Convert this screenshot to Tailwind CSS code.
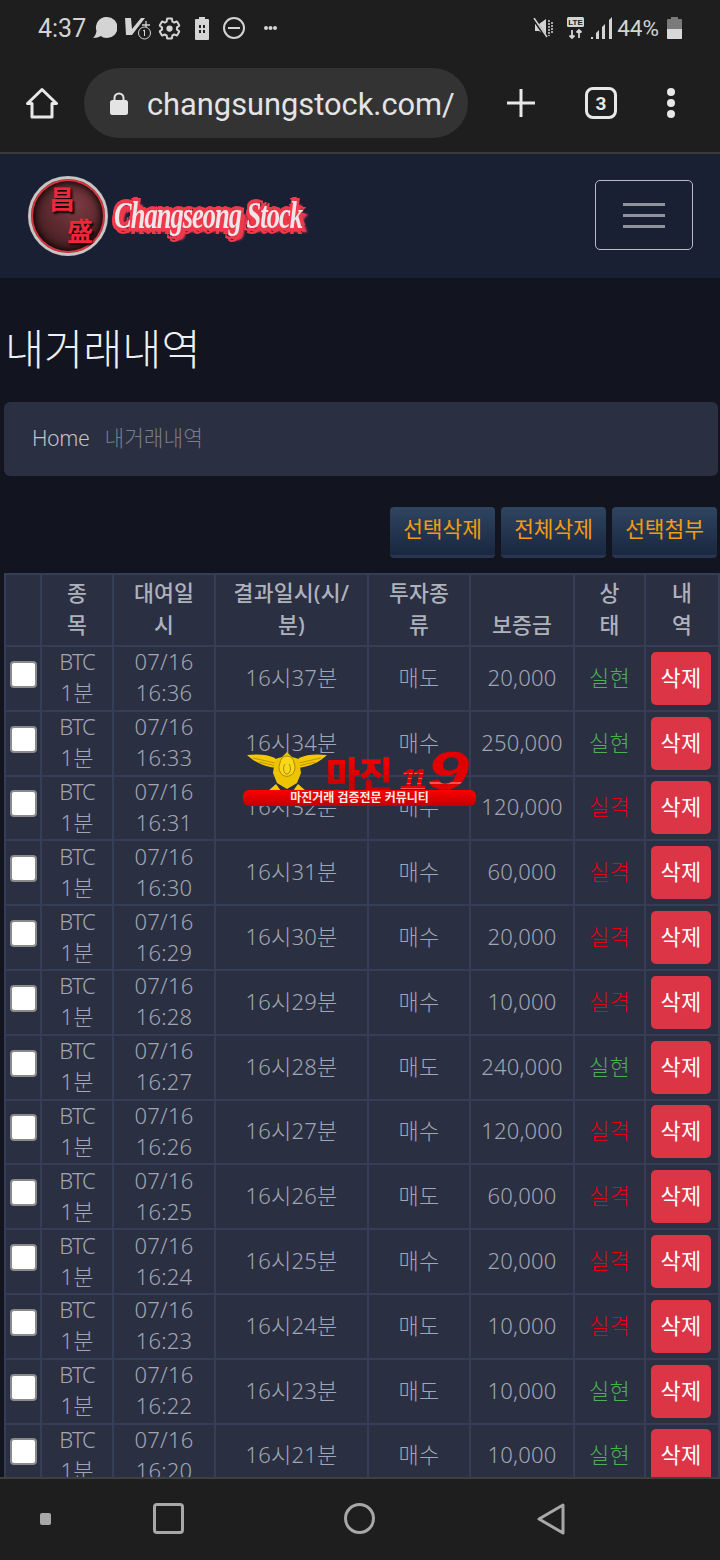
<!DOCTYPE html><html lang="ko">
<head>
  <meta charset="UTF-8" />
  <meta name="viewport" content="width=device-width, initial-scale=1.0" />
  <title>내거래내역</title>
  <script src="https://cdn.jsdelivr.net/npm/@tailwindcss/browser@4"></script>
</head>
<body class="bg-[#1e1e1e] font-['Noto_Sans','Noto_Sans_CJK_KR',sans-serif]">
<div class="relative w-[720px] h-[1560px] overflow-hidden flex flex-col">

  <!-- status bar -->
  <div class="h-[56px] shrink-0 bg-[#1e1e1e] flex items-center pl-[38px] pr-[38px] text-[#d4d4d4] font-['Roboto',sans-serif]">
    <span class="text-[25px] leading-none">4:37</span>
    <svg class="ml-[7px] w-[24px] h-[22px]" viewBox="0 0 24 22" fill="#d4d4d4"><path d="M14 0a10.500 10.500 0 0 1 0 21c-3 0-5-1-6-2-2 1-5 2-8 2 2-2 3-4 3.500-7A10.500 10.500 0 0 1 14 0z"/></svg>
    <svg class="ml-[8px] w-[27px] h-[24px]" viewBox="0 0 27 24"><path d="M0 2h6l1 11L16 2h4L7 19H1z" fill="#d4d4d4"/><path d="M21 5v8M17 9h8" stroke="#d4d4d4" stroke-width="1.300"/><circle cx="19.500" cy="17" r="6" fill="#1e1e1e" stroke="#d4d4d4" stroke-width="1"/><path d="M19.500 14v6M18 15l1.500-1" stroke="#d4d4d4" stroke-width="1" fill="none"/></svg>
    <svg class="ml-[5px] w-[25px] h-[25px]" viewBox="0 0 24 24" fill="none" stroke="#d4d4d4" stroke-width="1.900"><circle cx="12" cy="12" r="3" fill="#d4d4d4" stroke="none"/><path d="M19.140 12.940c.04-.3.06-.61.06-.94 0-.32-.02-.64-.07-.94l2.030-1.580c.18-.14.23-.41.12-.61l-1.920-3.320c-.12-.22-.37-.29-.59-.22l-2.390.96c-.5-.38-1.030-.7-1.620-.94l-.36-2.540c-.04-.24-.24-.41-.48-.41h-3.840c-.24 0-.43.17-.47.41l-.36 2.540c-.59.24-1.130.57-1.620.94l-2.390-.96c-.22-.08-.47 0-.59.22L2.740 8.870c-.12.21-.08.47.12.61l2.030 1.580c-.05.3-.09.63-.09.94s.02.64.07.94l-2.030 1.580c-.18.14-.23.41-.12.61l1.920 3.320c.12.22.37.29.59.22l2.390-.96c.5.38 1.030.7 1.620.94l.36 2.540c.05.24.24.41.48.41h3.840c.24 0 .44-.17.47-.41l.36-2.540c.59-.24 1.130-.56 1.620-.94l2.390.96c.22.08.47 0 .59-.22l1.920-3.320c.12-.22.07-.47-.12-.61l-2.010-1.580z"/></svg>
    <svg class="ml-[12px] w-[16px] h-[23px]" viewBox="0 0 16 23"><path d="M5 0h6v2h3a1 1 0 0 1 1 1v19a1 1 0 0 1-1 1H2a1 1 0 0 1-1-1V3a1 1 0 0 1 1-1h3z" fill="#d4d4d4"/><path d="M5 8h2v3H5zM9 8h2v3H9zM5 13h2v3H5zM9 13h2v3H9z" fill="#1e1e1e"/></svg>
    <svg class="ml-[12px] w-[24px] h-[24px]" viewBox="0 0 24 24" fill="none" stroke="#d4d4d4" stroke-width="2"><circle cx="12" cy="12" r="10"/><path d="M6 12h12"/></svg>
    <svg class="ml-[18px] w-[13px] h-[6px]" viewBox="0 0 13 6" fill="#d4d4d4"><circle cx="2" cy="3" r="2"/><circle cx="6.500" cy="3" r="2"/><circle cx="11" cy="3" r="2"/></svg>
    <div class="flex-1"></div>
    <svg class="w-[21px] h-[20px]" viewBox="0 0 21 20" fill="#d4d4d4"><path d="M2 6h4l7-5v17l-7-5H2z"/><path d="M0 0l13 19" stroke="#1e1e1e" stroke-width="3"/><path d="M1 0l13 19" stroke="#d4d4d4" stroke-width="1.500"/><path d="M16 2v16M19 4v12" stroke="#d4d4d4" stroke-width="1.500" stroke-dasharray="2 1"/></svg>
    <svg class="ml-[13px] w-[17px] h-[22px]" viewBox="0 0 17 22"><rect width="17" height="10" rx="1.500" fill="#d4d4d4"/><text x="8.500" y="8" text-anchor="middle" font-size="8" font-weight="700" fill="#1e1e1e" font-family="Liberation Sans">LTE</text><path d="M5 13v8M2.500 18.500L5 21l2.500-2.500M12 21v-8M9.500 15.500L12 13l2.500 2.500" stroke="#d4d4d4" stroke-width="1.800" fill="none"/></svg>
    <svg class="ml-[7px] w-[21px] h-[22px]" viewBox="0 0 21 22" fill="#d4d4d4"><path d="M0 20h2v2H0zM5 16l3-3v9H5zM11 10l3-3v15h-3zM18 3l3-3v22h-3z"/></svg>
    <span class="ml-[5px] text-[22.500px] leading-none">44%</span>
    <svg class="ml-[8px] w-[15px] h-[22px]" viewBox="0 0 15 22"><path d="M4 0h7v2h3a1 1 0 0 1 1 1v18a1 1 0 0 1-1 1H1a1 1 0 0 1-1-1V3a1 1 0 0 1 1-1h3z" fill="#7a7a7a"/><path d="M0 12h15v9a1 1 0 0 1-1 1H1a1 1 0 0 1-1-1z" fill="#d8d8d8"/></svg>
  </div>

  <!-- browser toolbar -->
  <div class="h-[96px] shrink-0 bg-[#1e1e1e] flex items-center pb-[2px]">
    <svg class="ml-[26px] w-[32px] h-[32px]" viewBox="0 0 32 32" fill="none" stroke="#e8e8e8" stroke-width="3" stroke-linejoin="round"><path d="M1.500 16.500L16 2.500l14.500 14H26V30H6V16.500z"/></svg>
    <div class="ml-[26px] w-[384px] h-[70px] rounded-full bg-[#333333] flex items-center pl-[26px]">
      <svg class="w-[18px] h-[23px]" viewBox="0 0 18 23"><path d="M4.500 9V6a4.500 4.500 0 0 1 9 0v3" fill="none" stroke="#e4e4e4" stroke-width="2"/><rect y="8" width="18" height="15" rx="2.500" fill="#e4e4e4"/></svg>
      <span class="ml-[19px] mt-[4px] text-[30.800px] leading-none text-[#e4e4e4] font-['Roboto',sans-serif] whitespace-nowrap">changsungstock.com/</span>
    </div>
    <svg class="ml-[38px] w-[30px] h-[30px]" viewBox="0 0 30 30" stroke="#e8e8e8" stroke-width="3"><path d="M15 1v28M1 15h28"/></svg>
    <div class="ml-[49px] w-[32px] h-[32px] rounded-[8px] border-[3px] border-[#e8e8e8] flex items-center justify-center text-[#e8e8e8] text-[19px] font-bold font-['Roboto',sans-serif] leading-none">3</div>
    <div class="ml-[50px] flex flex-col gap-[3px]">
      <span class="w-[8px] h-[8px] rounded-full bg-[#e8e8e8]"></span>
      <span class="w-[8px] h-[8px] rounded-full bg-[#e8e8e8]"></span>
      <span class="w-[8px] h-[8px] rounded-full bg-[#e8e8e8]"></span>
    </div>
  </div>

  <!-- site -->
  <div class="flex-1 min-h-0 overflow-hidden border-t-2 border-[#3a3a38] bg-[#12141f]">
    <nav class="h-[124px] bg-[#1a2033] flex items-center justify-between pl-[28px] pr-[27px]">
      <div class="flex items-center">
        <div class="relative w-[80px] h-[80px] rounded-full border-[3px] border-[#c9c4c4] bg-[radial-gradient(circle_at_60%_35%,#7c3a42,#3c1a1c_85%)] shadow-[inset_0_0_0_2px_#d8333f,inset_0_0_8px_3px_#000] overflow-hidden">
          <span class="absolute left-[18px] top-[6px] text-[26px] leading-none font-bold text-[#f0263a] font-['Noto_Sans_CJK_SC',serif] [text-shadow:2px_2px_2px_#000]">昌</span>
          <span class="absolute left-[36px] top-[38px] text-[26px] leading-none font-bold text-[#f0263a] font-['Noto_Sans_CJK_SC',serif] [text-shadow:2px_2px_2px_#000]">盛</span>
        </div>
        <span class="ml-[6px] mt-[-2px] inline-block origin-center scale-y-[1.45] whitespace-nowrap text-[26.500px] leading-none italic font-bold tracking-[-1px] text-[#eee6e8] font-['Liberation_Serif',serif] [text-shadow:0_0_2px_#f03a4c,2px_2px_0_#f03a4c,-2px_-2px_0_#f03a4c,4px_3px_1px_#f03a4c,-3px_2px_0_#f03a4c,3px_-2px_0_#f03a4c,5px_3px_2px_#e83a5c,0_4px_0_#f03a4c,0_-3px_0_#f03a4c]">Changseong Stock</span>
      </div>
      <button class="w-[98px] h-[70px] -mt-[2px] rounded-[5px] border border-[#b9bcc4] flex flex-col items-center justify-center gap-[8px]">
        <span class="w-[42px] h-[3px] bg-[#8f939c]"></span>
        <span class="w-[42px] h-[3px] bg-[#8f939c]"></span>
        <span class="w-[42px] h-[3px] bg-[#8f939c]"></span>
      </button>
    </nav>

    <main class="pt-[42px] font-light">
      <h1 class="pl-[5px] text-[42.500px] leading-[58px] text-[#eef0f3] font-light">내거래내역</h1>
      <div class="ml-[4px] mr-[2px] mt-[24px] h-[74px] rounded-[6px] bg-[#2a2f42] flex items-center pl-[28px] pb-[2px] text-[21.400px]">
        <span class="text-[#c2c5cc] tracking-[-0.400px]">Home</span>
        <span class="ml-[15px] text-[#787d8a]">내거래내역</span>
      </div>
      <div class="mt-[31px] pr-[3px] flex justify-end gap-[6px]">
        <button class="w-[105px] h-[51px] pb-[3px] rounded-[4px] text-[21.400px] font-normal text-[#f39c12] bg-gradient-to-b from-[#2f4560] to-[#1a2740] border-b-[3px] border-[#2a3550]">선택삭제</button>
        <button class="w-[105px] h-[51px] pb-[3px] rounded-[4px] text-[21.400px] font-normal text-[#f39c12] bg-gradient-to-b from-[#2f4560] to-[#1a2740] border-b-[3px] border-[#2a3550]">전체삭제</button>
        <button class="w-[105px] h-[51px] pb-[3px] rounded-[4px] text-[21.400px] font-normal text-[#f39c12] bg-gradient-to-b from-[#2f4560] to-[#1a2740] border-b-[3px] border-[#2a3550]">선택첨부</button>
      </div>
      <table class="ml-[4px] mt-[15px] w-[714px] table-fixed border-collapse text-[22px] tracking-[0.200px] leading-[31px] text-center text-[#a2a6b2] bg-[#2a2f42]">
        <colgroup>
          <col class="w-[36px]" /><col class="w-[72px]" /><col class="w-[102px]" /><col class="w-[153px]" /><col class="w-[102px]" /><col class="w-[104px]" /><col class="w-[71px]" /><col class="w-[74px]" />
        </colgroup>
        <thead>
          <tr class="h-[72px] align-bottom leading-[32px] text-[21.600px] text-[#aeb2bb]">
            <th class="border-2 border-[#363d56] font-medium"></th>
            <th class="border-2 border-[#363d56] font-medium pb-[4px]">종<br>목</th>
            <th class="border-2 border-[#363d56] font-medium pb-[4px] px-[12px]">대여일시</th>
            <th class="border-2 border-[#363d56] font-medium pb-[4px] px-[12px]">결과일시(시/분)</th>
            <th class="border-2 border-[#363d56] font-medium pb-[4px] px-[12px]">투자종류</th>
            <th class="border-2 border-[#363d56] font-medium pb-[4px] px-[12px]">보증금</th>
            <th class="border-2 border-[#363d56] font-medium pb-[4px]">상<br>태</th>
            <th class="border-2 border-[#363d56] font-medium pb-[4px]">내<br>역</th>
          </tr>
        </thead>
        <tbody id="rows"></tbody>
      </table>
    </main>
  </div>

  <!-- android nav bar -->
  <div class="relative h-[83px] shrink-0 border-t-2 border-[#3f3f3d] bg-[#1e1e1e] flex items-center pb-[2px]">
    <span class="ml-[40px] w-[11px] h-[12px] rounded-[2px] bg-[#a8a8a8]"></span>
    <span class="ml-[102px] w-[31px] h-[31px] rounded-[4px] border-[3px] border-[#a8a8a8]"></span>
    <span class="ml-[160px] w-[31px] h-[31px] rounded-full border-[3px] border-[#a8a8a8]"></span>
    <svg class="ml-[162px] w-[28px] h-[32px]" viewBox="0 0 28 32" fill="none" stroke="#a8a8a8" stroke-width="3" stroke-linejoin="round"><path d="M26 2v28L2 16z"/></svg>
  </div>

  <!-- watermark overlay -->
  <div class="absolute left-[243px] top-[752px] w-[233px] h-[56px]">
    <svg class="absolute left-[4px] top-0 w-[80px] h-[40px]" viewBox="0 0 80 40">
      <path d="M0 3c10-1 20-1 28 3l2 10C18 15 7 10 0 3zM80 3c-10-1-20-1-28 3l-2 10c12-1 23-6 30-13z" fill="#f5c800"/>
      <path d="M6 6l22 5M12 10l17 4M74 6l-22 5M68 10l-17 4" stroke="#a88a00" stroke-width="0.800"/>
      <path d="M40 0l5 5 7 2 2 14-4 10-10 6-10-6-4-10 2-14 7-2z" fill="#eec400"/>
      <path d="M33 11a8 9 0 1 0 14 0a7 7 0 0 0-14 0z" fill="#f9d71c" stroke="#a88a00" stroke-width="1"/>
      <path d="M38 12c-3 4-1 10 2 10s5-6 2-10" fill="none" stroke="#a88a00" stroke-width="1"/>
      <path d="M21 39l8-7 5 7zM59 39l-8-7-5 7z" fill="#f5c800"/>
    </svg>
    <span class="absolute left-[83px] -top-[3px] text-[37px] leading-[48px] font-black tracking-[-1px] text-transparent bg-clip-text bg-gradient-to-b from-[#ff0000] to-[#b80000] font-['Noto_Sans_CJK_KR',sans-serif]">마진</span>
    <span class="absolute left-[157px] top-[12px] pr-[6px] text-[30px] leading-[30px] italic font-black tracking-[-4px] text-transparent bg-clip-text bg-[repeating-linear-gradient(180deg,#e00000_0_4px,#ff5050_4px_5px)] font-['Liberation_Sans',sans-serif]">11</span>
    <span class="absolute left-[184px] -top-[9px] pr-[6px] origin-left scale-x-[1.4] text-[54px] leading-[54px] italic font-black text-transparent bg-clip-text bg-[linear-gradient(180deg,#e00000_0_72%,#ff5050_72%_76%,#e00000_76%)] font-['Liberation_Sans',sans-serif]">9</span>
    <div class="absolute left-0 top-[38px] w-[233px] h-[16px] rounded-[6px] bg-gradient-to-b from-[#ff0000] to-[#c00000] flex items-center justify-center text-[12px] leading-none font-bold text-[#ffe9e9]">마진거래 검증전문 커뮤니티</div>
  </div>
</div>

<script>
  // 거래내역 rows: [일시, 결과, 종류, 금액, 상태]
  const DATA = [
    ["16:36","16시37분","매도","20,000","실현"],
    ["16:33","16시34분","매수","250,000","실현"],
    ["16:31","16시32분","매수","120,000","실격"],
    ["16:30","16시31분","매수","60,000","실격"],
    ["16:29","16시30분","매수","20,000","실격"],
    ["16:28","16시29분","매수","10,000","실격"],
    ["16:27","16시28분","매도","240,000","실현"],
    ["16:26","16시27분","매수","120,000","실격"],
    ["16:25","16시26분","매도","60,000","실격"],
    ["16:24","16시25분","매수","20,000","실격"],
    ["16:23","16시24분","매도","10,000","실격"],
    ["16:22","16시23분","매도","10,000","실현"],
    ["16:20","16시21분","매수","10,000","실현"]
  ];
  const td = "border-2 border-[#363d56] p-0";
  const up = "block -translate-y-[1px]";
  document.getElementById("rows").innerHTML = DATA.map(([time, result, type, amount, status]) => `
    <tr class="h-[64.800px]">
      <td class="${td}"><span class="block ml-[4px] w-[27px] h-[27px] -mt-[8px] rounded-[4px] bg-white border-2 border-[#8a8a8a]"></span></td>
      <td class="${td}"><span class="${up}"><span class="tracking-[-1.200px]">BTC</span><br>1분</span></td>
      <td class="${td}"><span class="${up}">07/16<br>${time}</span></td>
      <td class="${td}"><span class="${up}">${result}</span></td>
      <td class="${td}"><span class="${up}">${type}</span></td>
      <td class="${td}"><span class="${up}">${amount}</span></td>
      <td class="${td} ${status === "실현" ? "text-[#4caf50]" : "text-[#e60012]"}"><span class="${up}">${status}</span></td>
      <td class="${td}"><button class="block ml-[5px] w-[60px] h-[53px] pb-[2px] rounded-[5px] bg-[#dc3545] text-white font-normal">삭제</button></td>
    </tr>`).join("");
</script>
</body>
</html>
